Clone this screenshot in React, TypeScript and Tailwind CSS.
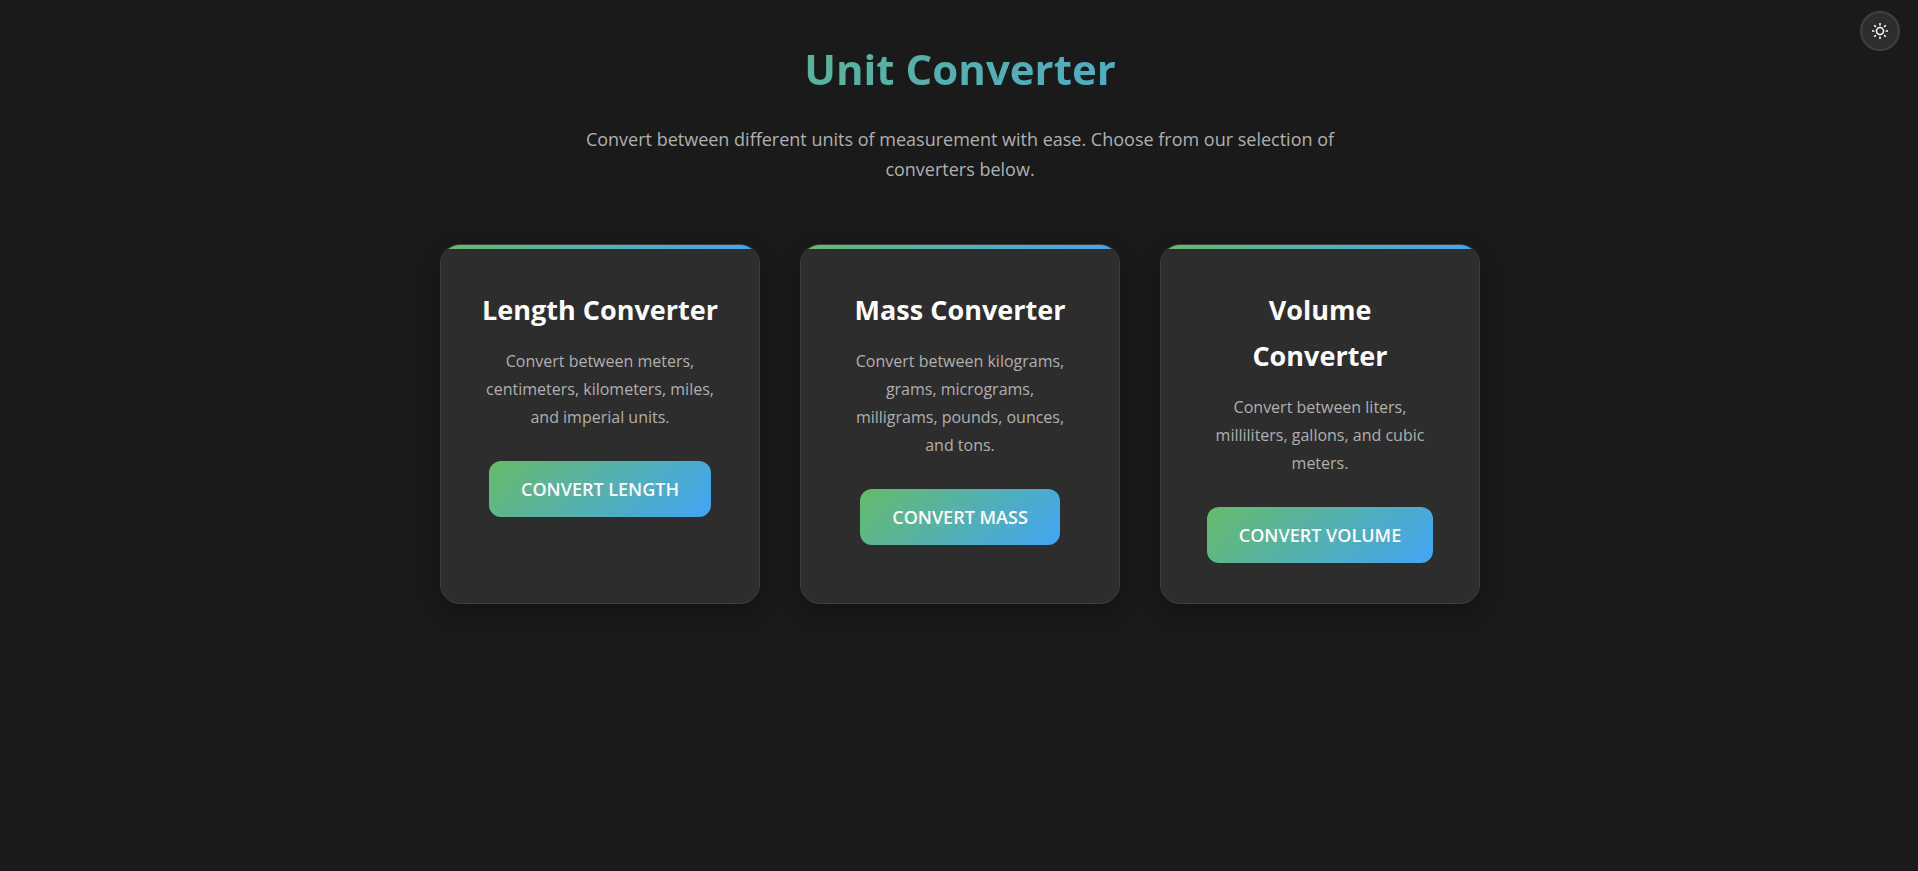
type Converter = {
  title: string;
  description: string;
  action: string;
  href: string;
};

const converters: Converter[] = [
  {
    title: 'Length Converter',
    description: 'Convert between meters, centimeters, kilometers, miles, and imperial units.',
    action: 'Convert Length',
    href: '#length',
  },
  {
    title: 'Mass Converter',
    description: 'Convert between kilograms, grams, micrograms, milligrams, pounds, ounces, and tons.',
    action: 'Convert Mass',
    href: '#mass',
  },
  {
    title: 'Volume Converter',
    description: 'Convert between liters, milliliters, gallons, and cubic meters.',
    action: 'Convert Volume',
    href: '#volume',
  },
];

function SunIcon() {
  return (
    <svg viewBox="0 0 16 16" className="size-4" fill="none" stroke="currentColor" aria-hidden="true">
      <circle cx="8" cy="8" r="3.5" strokeWidth="1.5" />
      <path
        strokeWidth="1.5"
        d="M8 0v2.4M8 13.6V16M0 8h2.4M13.6 8H16M2.2 2.2l1.7 1.7M12.1 12.1l1.7 1.7M2.2 13.8l1.7-1.7M12.1 3.9l1.7-1.7"
      />
    </svg>
  );
}

function ConverterCard({ title, description, action, href }: Converter) {
  return (
    <article className="relative flex flex-col items-center overflow-hidden rounded-[20px] border border-[#404040] bg-[#2d2d2d] px-10 pt-[42px] pb-10 text-center shadow-[0_8px_25px_rgba(0,0,0,0.3)]">
      <div className="absolute inset-x-0 top-0 h-1 bg-[linear-gradient(90deg,#66bb6a,#42a5f5)]" />
      <h2 className="mb-3.5 text-[27px] leading-[46px] font-bold text-white">{title}</h2>
      <p className="mb-[30px] max-w-[232px] text-base leading-7 text-[#b0b0b0]">{description}</p>
      <a
        href={href}
        className="rounded-xl bg-[linear-gradient(135deg,#66bb6a,#42a5f5)] px-8 py-3.5 text-lg leading-7 font-semibold whitespace-nowrap text-white uppercase"
      >
        {action}
      </a>
    </article>
  );
}

export default function App() {
  return (
    <div className="min-h-screen bg-[#1a1a1a] pl-0.5 font-['Open_Sans','Noto_Sans',sans-serif]">
      <button
        type="button"
        aria-label="Toggle theme"
        className="fixed top-[11px] right-[18px] flex size-10 items-center justify-center rounded-full border-2 border-[#404040] bg-[#2d2d2d] text-white"
      >
        <SunIcon />
      </button>
      <main className="mx-auto max-w-[1120px] px-10 py-8">
        <header className="mb-15 text-center">
          <h1 className="mb-[18px] bg-[linear-gradient(135deg,#66bb6a,#42a5f5)] bg-clip-text text-[42px] leading-[74px] font-bold text-transparent">
            Unit Converter
          </h1>
          <p className="mx-auto max-w-[800px] text-lg leading-[30px] text-[#b0b0b0]">
            Convert between different units of measurement with ease. Choose from our selection of converters below.
          </p>
        </header>
        <section aria-label="Converters" className="grid gap-10 md:grid-cols-3">
          {converters.map((converter) => (
            <ConverterCard key={converter.title} {...converter} />
          ))}
        </section>
      </main>
    </div>
  );
}
